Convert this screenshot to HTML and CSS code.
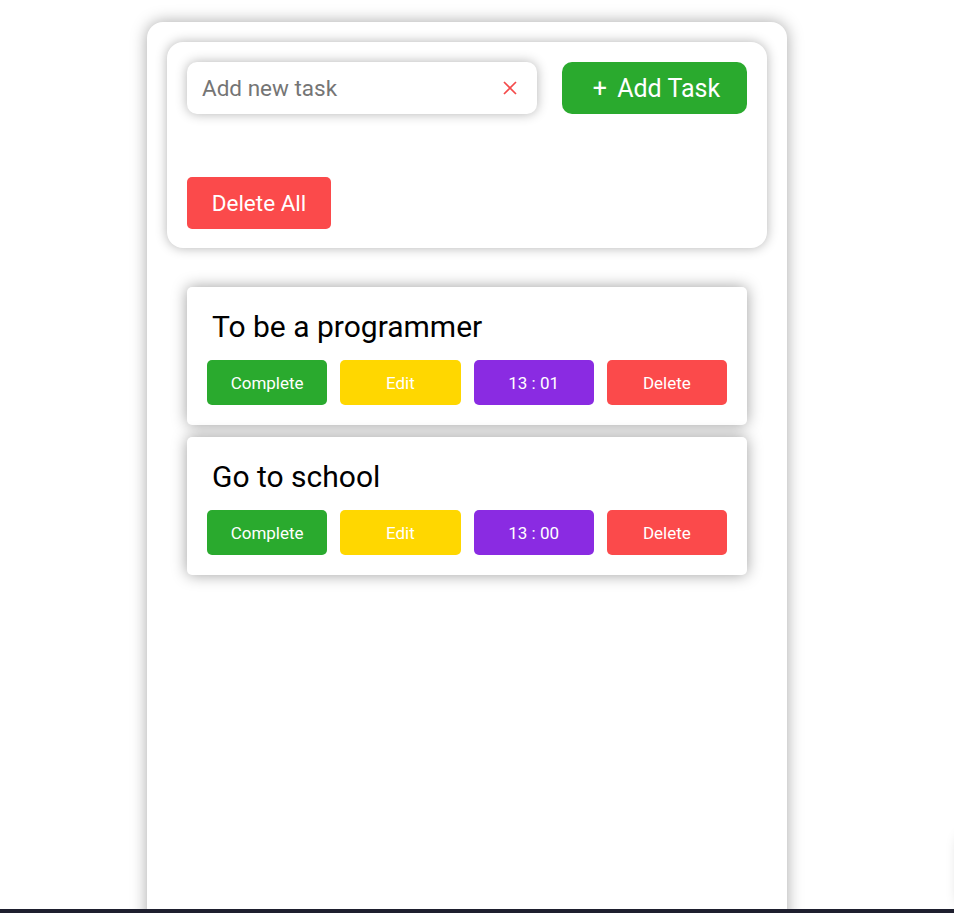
FILE: index.html
```html
<!DOCTYPE html>
<html lang="en">
<head>
<meta charset="utf-8">
<title>Todo</title>
<link rel="stylesheet" href="styles.css">
</head>
<body>
<div class="app">
  <div class="panel">
    <div class="add-row">
      <div class="field">
        <input class="field-input" type="text" placeholder="Add new task">
        <svg class="field-clear" width="14" height="14" viewBox="0 0 14 14"><path d="M1 1L13 13M13 1L1 13" stroke="#f44a4a" stroke-width="1.7" fill="none"/></svg>
      </div>
      <button class="btn-add"><span class="plus">+</span> Add Task</button>
    </div>
    <button class="btn-delete-all">Delete All</button>
  </div>
  <div class="tasks">
    <div class="task">
      <div class="task-title">To be a programmer</div>
      <div class="task-actions">
        <button class="act act-complete">Complete</button>
        <button class="act act-edit">Edit</button>
        <button class="act act-time">13 : 01</button>
        <button class="act act-delete">Delete</button>
      </div>
    </div>
    <div class="task">
      <div class="task-title">Go to school</div>
      <div class="task-actions">
        <button class="act act-complete">Complete</button>
        <button class="act act-edit">Edit</button>
        <button class="act act-time">13 : 00</button>
        <button class="act act-delete">Delete</button>
      </div>
    </div>
  </div>
</div>
<div class="edge-shadow"></div>
<div class="taskbar"></div>
</body>
</html>
```
FILE: styles.css
```css
html, body {
  margin: 0;
  padding: 0;
  background: #ffffff;
  overflow: hidden;
  height: 913px;
}
body {
  font-family: Roboto, "Liberation Sans", sans-serif;
}
.app {
  box-sizing: border-box;
  width: 640px;
  min-height: 940px;
  margin: 22px 0 0 147px;
  padding: 20px;
  background: #fff;
  border-radius: 16px;
  box-shadow: 0 0 16px rgba(0, 0, 0, 0.35);
}
.panel {
  box-sizing: border-box;
  height: 206px;
  padding: 20px;
  border-radius: 16px;
  background: #fff;
  box-shadow: 0 0 12px rgba(0, 0, 0, 0.3);
}
.add-row {
  display: flex;
  gap: 25px;
}
.field {
  box-sizing: border-box;
  width: 350px;
  height: 52px;
  display: flex;
  align-items: center;
  padding: 0 20px 0 15px;
  border-radius: 10px;
  background: #fff;
  box-shadow: 0 0 12px rgba(0, 0, 0, 0.3);
}
.field-input {
  flex: 1;
  min-width: 0;
  border: none;
  outline: none;
  background: transparent;
  padding: 0;
  font-family: Roboto, "Liberation Sans", sans-serif;
  font-size: 22.5px;
  color: #333;
}
.field-input::placeholder {
  color: #757575;
}
.field-clear {
  display: block;
  flex: none;
}
.btn-add {
  width: 185px;
  height: 52px;
  border: none;
  border-radius: 10px;
  background: #2aaa2e;
  color: #fff;
  font-family: Roboto, "Liberation Sans", sans-serif;
  font-size: 25px;
  padding: 0 0 0 4px;
}
.plus {
  margin-right: 4px;
}
.btn-delete-all {
  display: block;
  margin-top: 63px;
  width: 144px;
  height: 52px;
  border: none;
  border-radius: 5px;
  background: #fb4a4b;
  color: #fff;
  font-family: Roboto, "Liberation Sans", sans-serif;
  font-size: 22.5px;
  padding: 0;
}
.tasks {
  margin: 39px 20px 0;
  display: flex;
  flex-direction: column;
  gap: 12px;
}
.task {
  box-sizing: border-box;
  height: 138px;
  padding: 20px;
  border-radius: 5px;
  background: #fff;
  box-shadow: 0 0 15px rgba(0, 0, 0, 0.38);
}
.task-title {
  padding-left: 5px;
  font-size: 30px;
  line-height: 40px;
  color: #000;
}
.task-actions {
  margin-top: 13px;
  display: flex;
  gap: 13px;
}
.act {
  flex: 1;
  height: 45px;
  border: none;
  border-radius: 5px;
  color: #fff;
  font-family: Roboto, "Liberation Sans", sans-serif;
  font-size: 17px;
  padding: 0;
}
.act-complete { background: #2aaa2e; }
.act-edit { background: #ffd700; }
.act-time { background: #8a2be2; }
.act-delete { background: #fb4a4b; }
.edge-shadow {
  position: absolute;
  left: 960px;
  top: 835px;
  width: 40px;
  height: 70px;
  border-radius: 10px;
  box-shadow: 0 0 14px rgba(0, 0, 0, 0.25);
}
.taskbar {
  position: fixed;
  left: 0;
  right: 0;
  bottom: 0;
  height: 4px;
  background: #1e1f2e;
}
```
